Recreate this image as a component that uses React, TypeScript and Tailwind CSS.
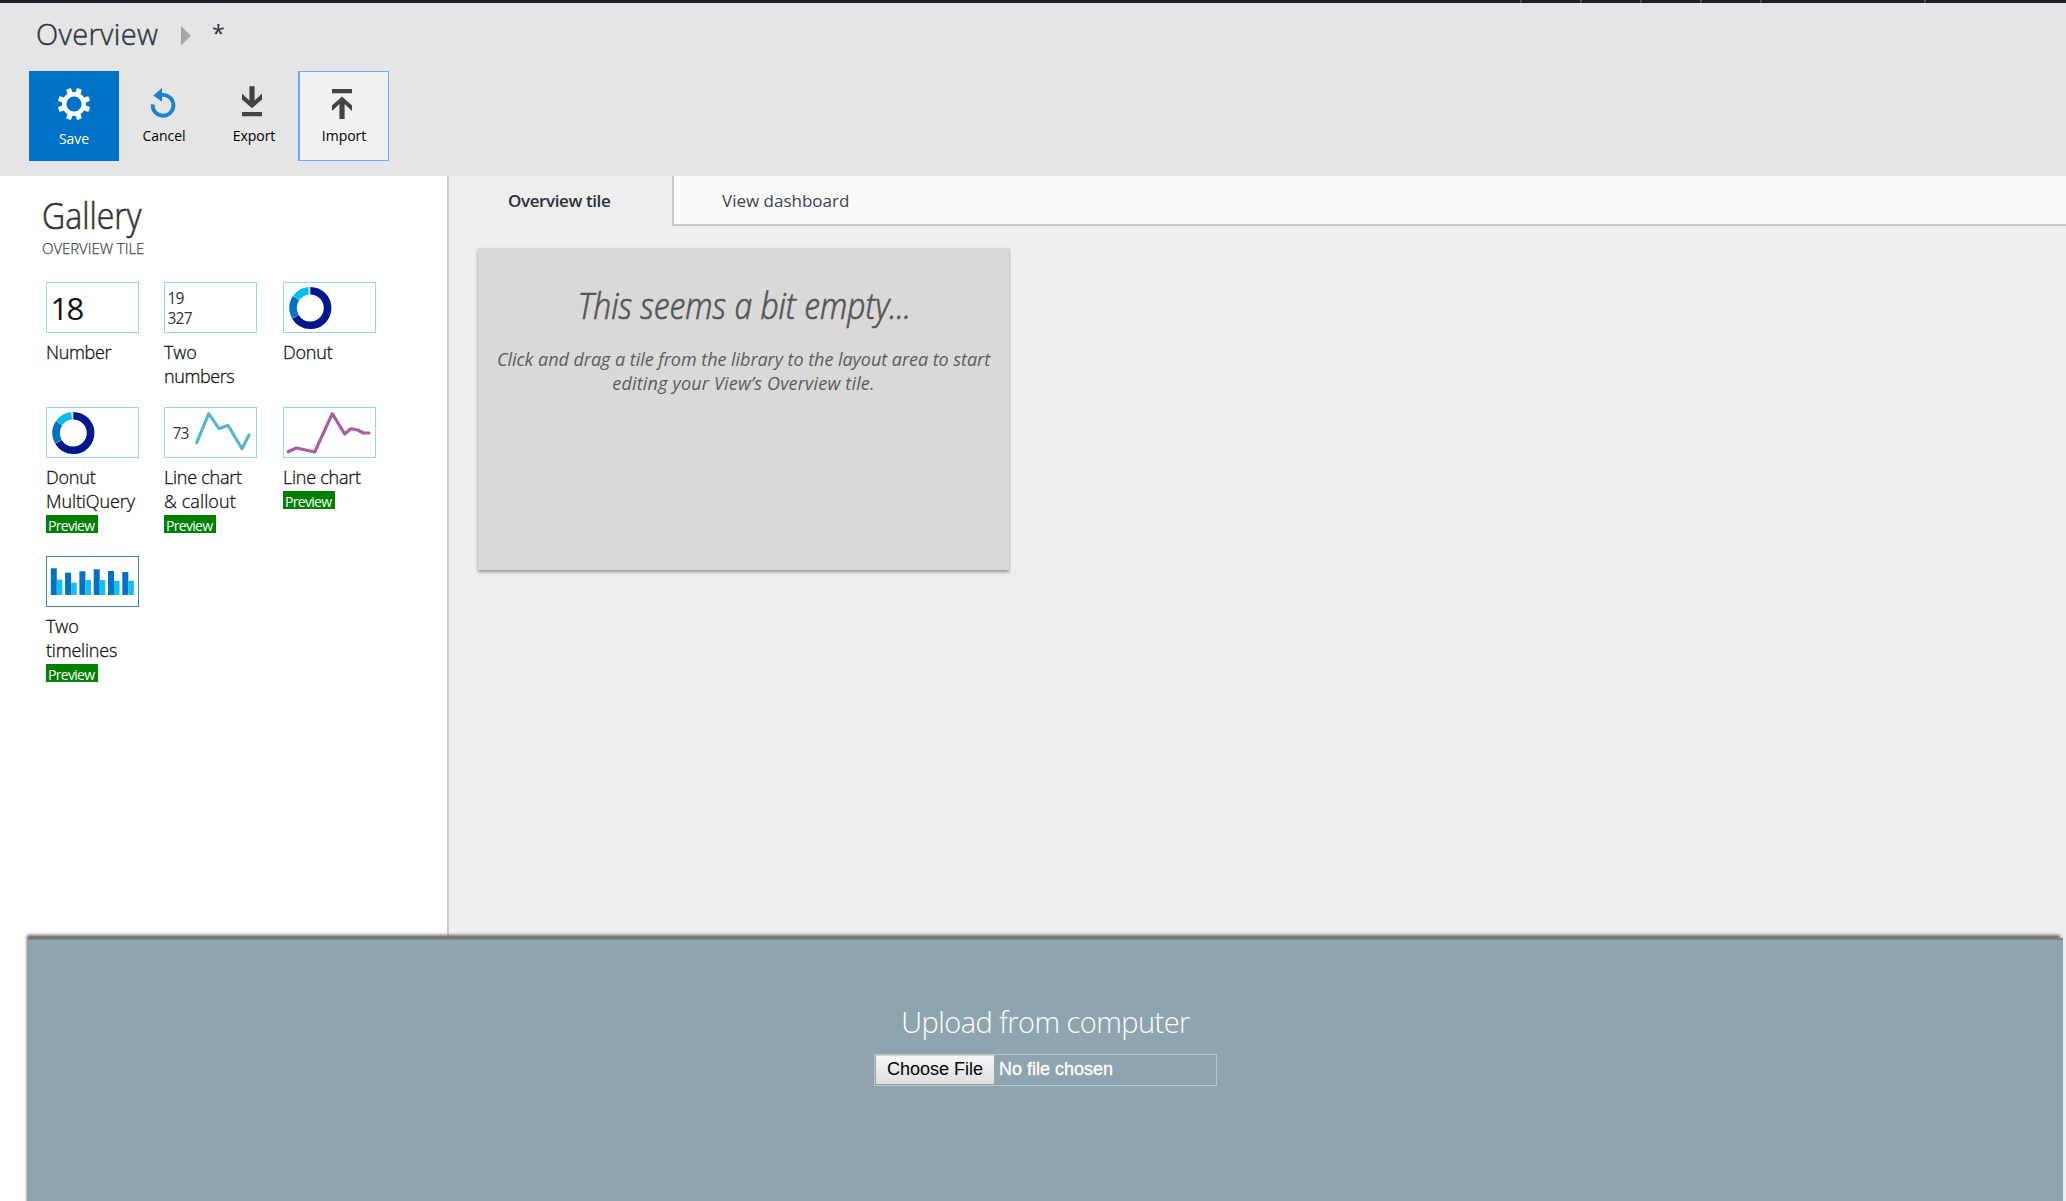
import type { ReactNode } from "react";

const GearIcon = () => (
  <svg className="h-9 w-9" viewBox="-18 -18 36 36" fill="#fff">
    {[20, 70, 110, 160, 200, 250, 290, 340].map((a) => (
      <rect key={a} x="-2.6" y="-16.2" width="5.2" height="6.5" rx="0.8" transform={`rotate(${a})`} />
    ))}
    <circle r="9.8" fill="none" stroke="#fff" strokeWidth="4.4" />
  </svg>
);

const UndoIcon = () => (
  <svg className="-ml-[2px] h-9 w-9" viewBox="-18 -18 36 36">
    <path d="M-10.3 -0.6 A10.4 10.4 0 1 0 -1 -10" fill="none" stroke="#1883d0" strokeWidth="3.8" />
    <path d="M-9.6 -9.6 L-1 -17 V-3.2 Z" fill="#1883d0" />
  </svg>
);

const ExportIcon = () => (
  <svg className="-ml-[4px] h-9 w-9" viewBox="0 0 36 36" fill="#434343">
    <path d="M15.4 3.2h5.2v14.3l7.4-7v6L18 25.3 8 16.5v-6l7.4 7zM8 29h20v4.2H8z" />
  </svg>
);

const ImportIcon = () => (
  <svg className="-ml-[4px] h-9 w-9" viewBox="0 0 36 36" fill="#434343">
    <path d="M8 6h20v4.3H8zM18 13.6l10 8.9v5.6l-7.4-7v15h-5.2v-15l-7.4 7v-5.6z" />
  </svg>
);

function ToolButton({ icon, label, className }: { icon: ReactNode; label: string; className: string }) {
  return (
    <button className={`flex h-[90px] flex-col items-center text-[14px] leading-5 tracking-[-0.05px] text-black ${className}`}>
      {icon}
      <span>{label}</span>
    </button>
  );
}

const donut = (
  <g fill="none" strokeWidth="7.6" transform="translate(27.3 26) rotate(-90)">
    <circle r="17.3" pathLength="360" stroke="#00188f" strokeDasharray="239 360" />
    <circle r="17.3" pathLength="360" stroke="#0072c6" strokeDasharray="65 360" strokeDashoffset="-240" />
    <circle r="17.3" pathLength="360" stroke="#00bcf2" strokeDasharray="48 360" strokeDashoffset="-306" />
    <circle r="17.3" pathLength="360" stroke="#dddddd" strokeDasharray="4 360" strokeDashoffset="-355" />
  </g>
);

const barTops = [
  [12.3, 23.7],
  [16.7, 26.7],
  [15.3, 24],
  [13.3, 24],
  [15, 24.7],
  [16, 24.7],
];

type Tile = { lines: [string, string][]; preview?: boolean; dark?: boolean; art: ReactNode };

const tiles: Tile[] = [
  {
    lines: [["Number", "tracking-[-0.3px]"]],
    art: <text x="4.5" y="37.5" fontSize="31" letterSpacing="-1.7" fill="#111">18</text>,
  },
  {
    lines: [["Two", "tracking-[-0.1px]"], ["numbers", "tracking-[-0.4px]"]],
    art: (
      <g fontSize="15.5" letterSpacing="-0.8" fill="#333">
        <text x="3.5" y="21.5">19</text>
        <text x="3.5" y="41.5">327</text>
      </g>
    ),
  },
  { lines: [["Donut", "tracking-[-0.2px]"]], art: donut },
  {
    lines: [["Donut", "tracking-[-0.2px]"], ["MultiQuery", "tracking-[-0.1px]"]],
    preview: true,
    art: donut,
  },
  {
    lines: [["Line chart", "tracking-[-0.25px]"], ["& callout", "tracking-[0.1px]"]],
    preview: true,
    art: (
      <>
        <text x="8.5" y="32.3" fontSize="15.5" letterSpacing="-0.8" fill="#333">73</text>
        <polyline
          points="32.7,35.7 44.7,6.7 55,21.7 64,18.3 78,41.7 85,28"
          fill="none" stroke="#59b8c8" strokeWidth="3.2" strokeLinecap="round" strokeLinejoin="round"
        />
      </>
    ),
  },
  {
    lines: [["Line chart", "tracking-[-0.25px]"]],
    preview: true,
    art: (
      <polyline
        points="5,44.7 13.3,41 31.7,45 49.3,6.7 61.7,27 67.7,21.7 74.7,23 80.3,26 86,26"
        fill="none" stroke="#a55fa3" strokeWidth="3.2" strokeLinecap="round" strokeLinejoin="round"
      />
    ),
  },
  {
    lines: [["Two", "tracking-[-0.1px]"], ["timelines", "tracking-[-0.2px]"]],
    preview: true,
    dark: true,
    art: barTops.map(([a, b], i) => (
      <g key={i}>
        <rect x={4.8 + i * 14.3} y={a} width="6" height={39 - a} fill="#0072c6" />
        <rect x={10.8 + i * 14.3} y={b} width="5.6" height={39 - b} fill="#17bdf0" />
      </g>
    )),
  },
];

function GalleryTile({ tile }: { tile: Tile }) {
  return (
    <div className="flex flex-col items-start">
      <div className={`h-[51px] w-[93px] border ${tile.dark ? "border-[#3d84ad]" : "border-[#93d7e8]"}`}>
        <svg className="-ml-px -mt-px block h-[51px] w-[93px]" viewBox="0 0 93 51">
          {tile.art}
        </svg>
      </div>
      <div className="mt-[7px] text-[18px] font-light leading-6 text-[#111] [-webkit-text-stroke:0.3px_#111]">
        {tile.lines.map(([t, tracking]) => (
          <div key={t} className={`whitespace-nowrap ${tracking}`}>{t}</div>
        ))}
      </div>
      {tile.preview && (
        <span className="mt-[2px] h-[18px] w-[52px] bg-[#008000] pl-[2px] text-[14px] leading-[22px] tracking-[-0.7px] text-white">
          Preview
        </span>
      )}
    </div>
  );
}

export default function App() {
  return (
    <div className="relative flex h-[1201px] w-[2066px] flex-col overflow-hidden bg-white font-['Open_Sans','Noto_Sans',sans-serif]">
      <div className="flex h-[3px] shrink-0 bg-[#1d2429] pl-[1520px]">
        {["mr-[58px]", "mr-[58px]", "mr-[58px]", "mr-[58px]", "mr-[162px]", ""].map((m, i) => (
          <span key={i} className={`h-[3px] w-[2px] bg-[#4a5054] ${m}`} />
        ))}
      </div>

      <header className="h-[173px] shrink-0 bg-[#e5e5e5] pl-[29px] pt-3">
        <div className="flex h-9 items-start pl-[7px] text-[29px] leading-9 text-[#2c343c]">
          <span className="mt-px w-[145px] font-light tracking-[0.35px] [-webkit-text-stroke:0.4px_#2c343c]">Overview</span>
          <svg className="mt-[11px] h-5 w-[10px]" viewBox="0 0 10 20" fill="#a6a6a6">
            <path d="M0 0L10 9.8L0 19.5Z" />
          </svg>
          <span className="ml-[21px] text-[23px]">*</span>
        </div>
        <div className="mt-5 flex">
          <ToolButton label="Save" className="w-[90px] bg-[#0072c6] pt-[15px] [&>span]:mt-[7px] [&>span]:text-white" icon={<GearIcon />} />
          <ToolButton label="Cancel" className="w-[90px] pt-4 [&>span]:mt-[3px]" icon={<UndoIcon />} />
          <ToolButton label="Export" className="w-[90px] pt-3 [&>span]:mt-[7px]" icon={<ExportIcon />} />
          <ToolButton label="Import" className="-ml-px w-[91px] border border-l-2 border-[#73a5f5] bg-[#f1f1f1] pt-[11px] [&>span]:mt-[7px]" icon={<ImportIcon />} />
        </div>
      </header>

      <main className="flex min-h-0 flex-1">
        <aside className="w-[449px] shrink-0 border-r-2 border-[#c9c9c9] bg-white pt-[15px]">
          <h1 className="ml-[42px] w-40 origin-left scale-x-[0.89] whitespace-nowrap text-[36px] font-light leading-[50px] text-[#333] [-webkit-text-stroke:0.6px_#333]">
            Gallery
          </h1>
          <div className="ml-[42px] mt-[-3px] text-[15px] font-light leading-5 tracking-[-0.05px] text-[#3f4854] [-webkit-text-stroke:0.25px_#3f4854]">
            OVERVIEW TILE
          </div>
          <div className="ml-[46px] mt-[24px] grid grid-cols-[118px_119px_93px] grid-rows-[125px_149px_auto]">
            {tiles.map((t, i) => (
              <GalleryTile key={i} tile={t} />
            ))}
          </div>
        </aside>

        <section className="flex-1 bg-[#eeeeee]">
          <nav className="flex h-[59px] text-[17px] leading-6">
            <div className="h-[50px] w-[223px] pl-[59px] pt-[13px] font-semibold tracking-[-0.4px] text-[#2a3138]">
              Overview tile
            </div>
            <div className="h-[50px] w-[228px] border-b-2 border-l-2 border-[#c8c8c8] bg-[#fafafa] pl-[48px] pt-[13px] text-[#3b444e]">
              View dashboard
            </div>
            <div className="h-[50px] flex-1 border-b-2 border-[#c8c8c8] bg-[#fafafa]" />
          </nav>
          <div className="ml-[29px] mt-[13px] flex h-[322px] w-[531px] flex-col items-center bg-[#d9d9d9] pt-[34px] italic text-[#555] shadow-[0_2px_3px_rgba(0,0,0,0.4)]">
            <h2 className="translate-x-px scale-x-[0.885] whitespace-nowrap text-[36px] font-light leading-[48px] [-webkit-text-stroke:0.7px_#555]">
              This seems a bit empty...
            </h2>
            <p className="mt-[17px] whitespace-nowrap text-center text-[18px] leading-6 text-[#5c5c5c]">
              <span className="tracking-[-0.04px]">Click and drag a tile from the library to the layout area to start</span>
              <br />
              <span className="tracking-[0.18px]">editing your View’s Overview tile.</span>
            </p>
          </div>
        </section>
      </main>

      <div className="absolute -bottom-2.5 left-[28px] flex h-[273px] w-[2035px] flex-col items-center border-t-2 border-[#808080] bg-[#8ea5af] pt-[62px] shadow-[-2px_-4px_3px_-1px_#666]">
        <div className="text-[29px] font-light leading-10 tracking-[-0.55px] text-white">Upload from computer</div>
        <div className="mt-[12px] flex h-8 w-[343px] border border-[#b7c5cb] font-['Liberation_Sans',Arial,sans-serif] text-[18px] leading-[28px]">
          <button className="h-[30px] w-[120px] border border-[#a0a0a0] border-t-[#cfcfcf] bg-linear-to-b from-[#f6f6f6] to-[#dedede] pb-[2px] text-[18px] leading-[24px] text-black">
            Choose File
          </button>
          <span className="ml-1 text-white [-webkit-text-stroke:0.3px_white]">No file chosen</span>
        </div>
      </div>
    </div>
  );
}
